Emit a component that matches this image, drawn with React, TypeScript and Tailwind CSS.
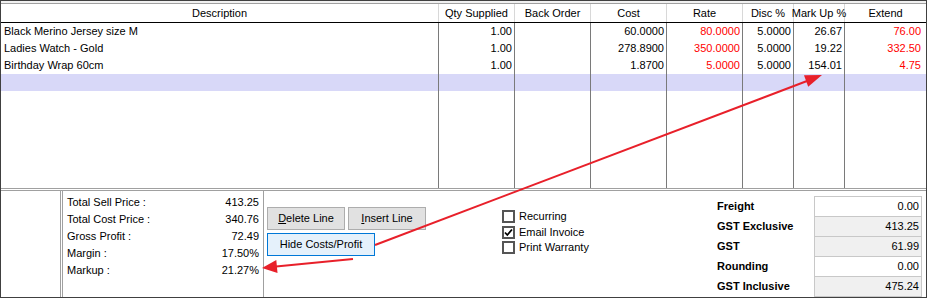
import React from "react";

const cols = [438, 76, 76, 76, 76, 51, 51, 81];
const headers = ["Description", "Qty Supplied", "Back Order", "Cost", "Rate", "Disc %", "Mark Up %", "Extend"];

type Cell = { t: string; red?: boolean };
const rows: Cell[][] = [
  [{ t: "Black Merino Jersey size M" }, { t: "1.00" }, { t: "" }, { t: "60.0000" }, { t: "80.0000", red: true }, { t: "5.0000" }, { t: "26.67" }, { t: "76.00", red: true }],
  [{ t: "Ladies Watch - Gold" }, { t: "1.00" }, { t: "" }, { t: "278.8900" }, { t: "350.0000", red: true }, { t: "5.0000" }, { t: "19.22" }, { t: "332.50", red: true }],
  [{ t: "Birthday Wrap 60cm" }, { t: "1.00" }, { t: "" }, { t: "1.8700" }, { t: "5.0000", red: true }, { t: "5.0000" }, { t: "154.01" }, { t: "4.75", red: true }],
];

const totals = [
  ["Total Sell Price :", "413.25"],
  ["Total Cost Price :", "340.76"],
  ["Gross Profit :", "72.49"],
  ["Margin :", "17.50%"],
  ["Markup :", "21.27%"],
];

const gst = [
  ["Freight", "0.00", false],
  ["GST Exclusive", "413.25", true],
  ["GST", "61.99", true],
  ["Rounding", "0.00", false],
  ["GST Inclusive", "475.24", true],
] as const;

function CheckBox({ checked, label }: { checked?: boolean; label: string }) {
  return (
    <div className="flex items-center h-[15px]">
      <div className="w-[13px] h-[13px] border-2 border-[#555555] bg-white flex items-center justify-center">
        {checked && (
          <svg width="9" height="9" viewBox="0 0 9 9">
            <path d="M1 4.5 L3.3 7 L8 1.5" fill="none" stroke="#000" strokeWidth="1.8" />
          </svg>
        )}
      </div>
      <span className="ml-[4px] leading-none">{label}</span>
    </div>
  );
}

export default function App() {
  return (
    <div className="relative w-[928px] h-[299px] bg-white overflow-hidden text-[11px] text-black font-['Liberation_Sans',Arial,sans-serif]">
      <div className="w-[927px] h-[298px] border border-[#404040] flex flex-col">
        {/* top strip */}
        <div className="h-[3px] bg-[#f0f0f0] border-b border-[#a0a0a0]" />
        {/* header */}
        <div className="h-[19px] border-b border-black grid grid-cols-[438px_76px_76px_76px_76px_51px_51px_81px]">
          {headers.map((h, i) => (
            <div
              key={h}
              className={`flex items-center justify-center whitespace-nowrap ${i < 7 ? "border-r border-[#d8d8d8]" : ""}`}
            >
              {h}
            </div>
          ))}
        </div>
        {/* body */}
        <div className="h-[165px] grid grid-cols-[438px_76px_76px_76px_76px_51px_51px_81px]">
          {cols.map((_, ci) => (
            <div key={ci} className={`flex flex-col h-full ${ci < 7 ? "border-r border-[#7a7a7a]" : ""}`}>
              {rows.map((r, ri) => (
                <div
                  key={ri}
                  className={`h-[17px] flex items-center whitespace-nowrap ${
                    ci === 0 ? "justify-start pl-[3px]" : ci === 7 ? "justify-end pr-[5px]" : "justify-end pr-[2px]"
                  } ${r[ci].red ? "text-[#ff0000]" : ""}`}
                >
                  {r[ci].t}
                </div>
              ))}
              <div className="h-[17px] bg-[#d8d8f8]" />
            </div>
          ))}
        </div>
        {/* bottom panel */}
        <div className="h-[109px] border-t-[3px] border-double border-[#a0a0a0] flex">
          <div className="w-[59px]" />
          <div className="w-[204px] border-l-[3px] border-double border-l-[#a0a0a0] border-r border-r-[#a0a0a0] pl-[4px] pr-[4px] pt-[2px]">
            {totals.map(([l, v], i) => (
              <div key={l} className={`${i === 0 ? "h-[18px]" : "h-[17px]"} flex items-center justify-between`}>
                <span>{l}</span>
                <span>{v}</span>
              </div>
            ))}
          </div>
          <div className="w-[238px] pl-[3px] pt-[16px]">
            <div className="flex gap-[3px]">
              <div className="w-[78px] h-[23px] bg-[#e1e1e1] border border-[#adadad] flex items-center justify-center">
                <span>
                  <span className="underline">D</span>elete Line
                </span>
              </div>
              <div className="w-[78px] h-[23px] bg-[#e1e1e1] border border-[#adadad] flex items-center justify-center">
                <span>
                  <span className="underline">I</span>nsert Line
                </span>
              </div>
            </div>
            <div className="mt-[3px] w-[108px] h-[23px] bg-[#e5f1fb] border border-[#0078d7] flex items-center justify-center">
              Hide Costs/Profit
            </div>
          </div>
          <div className="w-[215px] pt-[17px] flex flex-col">
            <div className="h-[16px] flex items-center"><CheckBox label="Recurring" /></div>
            <div className="h-[16px] flex items-center"><CheckBox checked label="Email Invoice" /></div>
            <div className="h-[15px] flex items-center"><CheckBox label="Print Warranty" /></div>
          </div>
          <div className="w-[97px] pt-[5px] flex flex-col font-bold">
            {gst.map(([l]) => (
              <div key={l} className="h-[20px] flex items-center whitespace-nowrap">{l}</div>
            ))}
          </div>
          <div className="w-[108px] pt-[5px]">
            <div className="border-x border-b border-[#c8c8c8]">
              {gst.map(([l, v, grey]) => (
                <div
                  key={l}
                  className={`h-[20px] border-t border-[#c8c8c8] flex items-center justify-end pr-[2px] ${grey ? "bg-[#f0f0f0]" : "bg-white"}`}
                >
                  {v}
                </div>
              ))}
            </div>
          </div>
          <div className="flex-1" />
        </div>
      </div>
      {/* arrows overlay */}
      <svg className="absolute inset-0 pointer-events-none" width="928" height="299" viewBox="0 0 928 299">
        <line x1="375" y1="245" x2="807" y2="81" stroke="#e8202a" strokeWidth="2" />
        <polygon points="822,75 808.2,86.8 804,75.2" fill="#e8202a" />
        <line x1="353" y1="259" x2="276" y2="266.5" stroke="#e8202a" strokeWidth="2" />
        <polygon points="262,268 277.5,273 276.3,260" fill="#e8202a" />
      </svg>
    </div>
  );
}
